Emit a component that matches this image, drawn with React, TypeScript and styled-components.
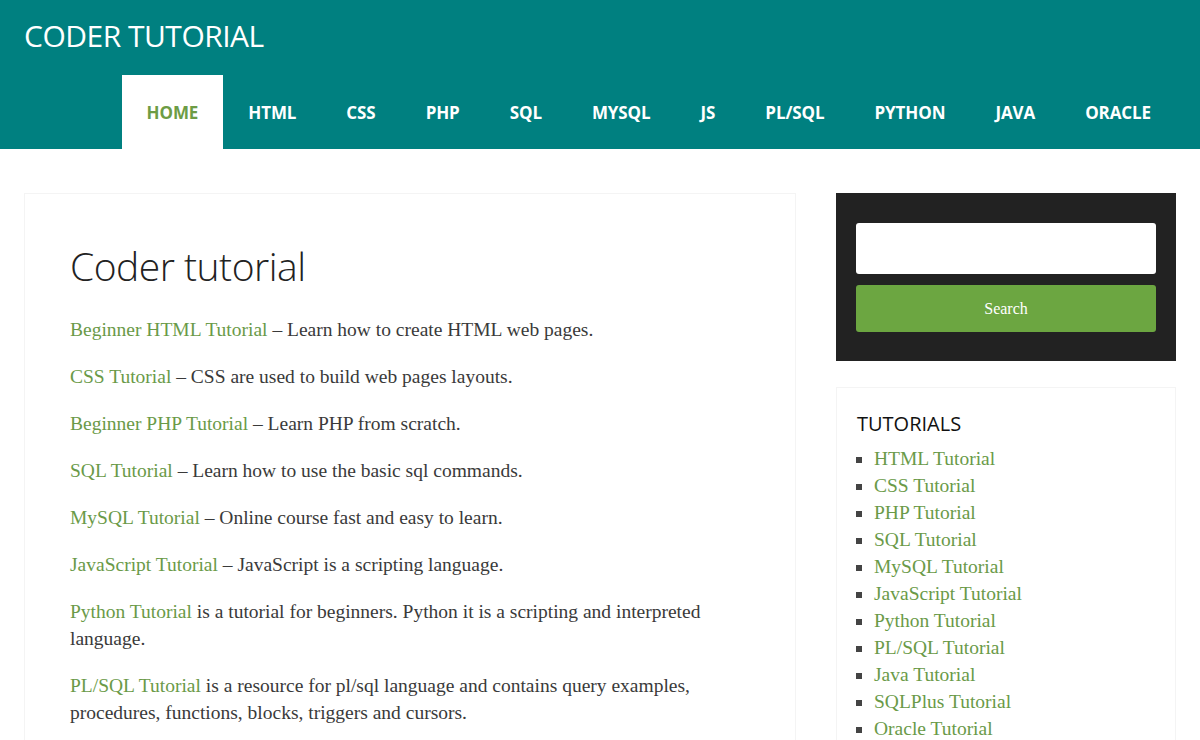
import React from "react";
import styled, { createGlobalStyle } from "styled-components";

const GlobalStyle = createGlobalStyle`
    html, body {
        margin: 0;
        padding: 0;
        background: #fff;
    }
    body {
        font-family: "Liberation Serif", Georgia, serif;
        color: #3a3a3a;
    }
`;

const Header = styled.header`
    background: #008080;
    padding: 0 24px;
`;

const TitleBar = styled.div`
    height: 75px;
    display: flex;
    align-items: center;
    padding-bottom: 5px;
    box-sizing: border-box;
`;

const SiteTitle = styled.a`
    font-family: "Open Sans", sans-serif;
    font-size: 30px;
    color: #fff;
    text-decoration: none;
    letter-spacing: -0.5px;
`;

const Nav = styled.nav`
    display: flex;
    justify-content: flex-end;
    height: 74px;
`;

const NavItem = styled.a<{ active?: boolean }>`
    display: flex;
    align-items: center;
    padding: 0 25px;
    font-family: "Open Sans", sans-serif;
    font-weight: 700;
    font-size: 17px;
    letter-spacing: -0.1px;
    text-decoration: none;
    color: ${({ active }) => (active ? "#6d9c45" : "#fff")};
    background: ${({ active }) => (active ? "#fff" : "transparent")};
`;

const Page = styled.div`
    display: flex;
    gap: 40px;
    padding: 44px 24px 0;
    align-items: flex-start;
`;

const Main = styled.main`
    flex: 0 0 772px;
    box-sizing: border-box;
    border: 1px solid #f4f4f4;
    padding: 46px 46px 40px 45px;
`;

const PageTitle = styled.h1`
    font-family: "Open Sans", sans-serif;
    font-weight: 300;
    font-size: 39px;
    color: #222;
    margin: 0 0 24px;
    line-height: 52px;
    letter-spacing: -0.5px;
`;

const Para = styled.p`
    font-size: 19.5px;
    line-height: 27px;
    margin: 0 0 20px;
    color: #3a3a3a;
`;

const Link = styled.a`
    color: #6a9a48;
    text-decoration: none;
`;

const Sidebar = styled.aside`
    flex: 0 0 340px;
    display: flex;
    flex-direction: column;
    gap: 26px;
`;

const SearchBox = styled.form`
    background: #222;
    padding: 30px 20px 29px;
    display: flex;
    flex-direction: column;
    gap: 11px;
`;

const SearchInput = styled.input`
    height: 51px;
    box-sizing: border-box;
    border: none;
    border-radius: 3px;
    background: #fff;
    outline: none;
`;

const SearchButton = styled.button`
    height: 47px;
    border: none;
    border-radius: 3px;
    background: #6ca641;
    color: #fff;
    font-family: "Liberation Serif", Georgia, serif;
    font-size: 16px;
`;

const Widget = styled.section`
    border: 1px solid #f4f4f4;
    padding: 20px;
`;

const WidgetTitle = styled.h2`
    font-family: "Open Sans", sans-serif;
    font-weight: 400;
    font-size: 20px;
    color: #111;
    margin: 1px 0 6px;
    line-height: 30px;
`;

const TutList = styled.ul`
    list-style: square;
    margin: 0;
    padding-left: 17px;
    color: #444;
`;

const TutItem = styled.li`
    font-size: 19.5px;
    line-height: 27px;
`;

const navItems = ["HOME", "HTML", "CSS", "PHP", "SQL", "MYSQL", "JS", "PL/SQL", "PYTHON", "JAVA", "ORACLE"];

const tutorials = [
    "HTML Tutorial",
    "CSS Tutorial",
    "PHP Tutorial",
    "SQL Tutorial",
    "MySQL Tutorial",
    "JavaScript Tutorial",
    "Python Tutorial",
    "PL/SQL Tutorial",
    "Java Tutorial",
    "SQLPlus Tutorial",
    "Oracle Tutorial",
];

export default function App() {
    return (
        <>
            <GlobalStyle />
            <Header>
                <TitleBar>
                    <SiteTitle href="#">CODER TUTORIAL</SiteTitle>
                </TitleBar>
                <Nav>
                    {navItems.map((item, i) => (
                        <NavItem key={item} href="#" active={i === 0}>
                            {item}
                        </NavItem>
                    ))}
                </Nav>
            </Header>
            <Page>
                <Main>
                    <PageTitle>Coder tutorial</PageTitle>
                    <Para>
                        <Link href="#">Beginner HTML Tutorial</Link> – Learn how to create HTML web pages.
                    </Para>
                    <Para>
                        <Link href="#">CSS Tutorial</Link> – CSS are used to build web pages layouts.
                    </Para>
                    <Para>
                        <Link href="#">Beginner PHP Tutorial</Link> – Learn PHP from scratch.
                    </Para>
                    <Para>
                        <Link href="#">SQL Tutorial</Link> – Learn how to use the basic sql commands.
                    </Para>
                    <Para>
                        <Link href="#">MySQL Tutorial</Link> – Online course fast and easy to learn.
                    </Para>
                    <Para>
                        <Link href="#">JavaScript Tutorial</Link> – JavaScript is a scripting language.
                    </Para>
                    <Para>
                        <Link href="#">Python Tutorial</Link> is a tutorial for beginners. Python it is a scripting and
                        interpreted language.
                    </Para>
                    <Para>
                        <Link href="#">PL/SQL Tutorial</Link> is a resource for pl/sql language and contains query
                        examples, procedures, functions, blocks, triggers and cursors.
                    </Para>
                </Main>
                <Sidebar>
                    <SearchBox onSubmit={(e) => e.preventDefault()}>
                        <SearchInput type="search" />
                        <SearchButton type="submit">Search</SearchButton>
                    </SearchBox>
                    <Widget>
                        <WidgetTitle>TUTORIALS</WidgetTitle>
                        <TutList>
                            {tutorials.map((t) => (
                                <TutItem key={t}>
                                    <Link href="#">{t}</Link>
                                </TutItem>
                            ))}
                        </TutList>
                    </Widget>
                </Sidebar>
            </Page>
        </>
    );
}
